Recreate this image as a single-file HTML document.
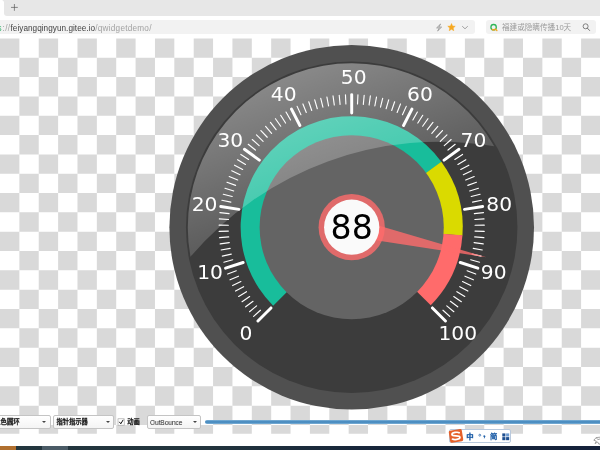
<!DOCTYPE html>
<html>
<head>
<meta charset="utf-8">
<title>qwidgetdemo</title>
<style>
html,body{margin:0;padding:0;}
body{width:600px;height:450px;overflow:hidden;background:#fff;position:relative;font-family:"Liberation Sans",sans-serif;}
.abs{position:absolute;}
#tabstrip{left:4px;top:0;width:596px;height:15.7px;background:#e7e7e7;border-bottom-left-radius:3px;}
#plus{left:10.9px;top:3.9px;width:6.8px;height:6.8px;}
#urlbar{left:-6px;top:20.3px;width:481px;height:13.7px;background:#f2f2f2;border-radius:3px;}
#url{will-change:transform;left:0;top:24.3px;height:10px;line-height:10px;font-size:8.2px;white-space:nowrap;color:#a2a2a2;}
#url span{top:0;}
#u1{left:-2.6px;}
#u2{left:2.6px;letter-spacing:0.3px;}
#u3{left:10.5px;letter-spacing:0.035px;}
#u4{left:95.3px;letter-spacing:0.24px;}
#url .s{color:#3cb371;}
#url .h{color:#444;}
#search{left:486px;top:20.3px;width:110px;height:13.7px;background:#f2f2f2;border-radius:3px;}
.gauge{position:absolute;left:0;top:0;}
.combo{height:11.7px;top:415.3px;background:linear-gradient(#fff,#f4f4f4);border:0.7px solid #c4c4c4;border-radius:2px;box-sizing:content-box;}
.arrow{position:absolute;top:5px;width:0;height:0;border-left:2px solid transparent;border-right:2px solid transparent;border-top:2.4px solid #444;}
.ctext{will-change:transform;position:absolute;font-size:6.4px;line-height:10px;top:1px;color:#333;white-space:nowrap;}
#slider{left:205px;top:420.2px;width:400px;height:3.4px;border-radius:2px;background:linear-gradient(#7fb2d8,#4a8cc0 40%,#4a8cc0 60%,#7fb2d8);}
#taskbar{left:0;top:445.6px;width:600px;height:5px;background:linear-gradient(90deg,#23363e 0,#22343d 35%,#17263a 60%,#14213a 100%);}
#ime{left:448.5px;top:429.2px;width:62.5px;height:13.6px;background:#fff;border:0.6px solid #b9c9dd;border-radius:2px;box-sizing:border-box;}
</style>
</head>
<body>
<div id="tabstrip" class="abs"></div>
<div class="abs" style="left:2.4px;top:0;width:1.7px;height:1.7px;background:radial-gradient(circle at 0 100%,#fff 1.5px,#e7e7e7 1.8px);"></div>
<svg id="plus" class="abs" viewBox="0 0 6 6"><path d="M3 0V6M0 3H6" stroke="#555" stroke-width="0.6" fill="none"/></svg>
<div id="urlbar" class="abs"></div>
<div id="url" class="abs"><span class="abs s" id="u1">s</span><span class="abs" id="u2">://</span><span class="abs h" id="u3">feiyangqingyun.gitee.io</span><span class="abs" id="u4">/qwidgetdemo/</span></div>
<div id="search" class="abs"></div>
<svg class="gauge" width="600" height="450" viewBox="0 0 600 450">
<defs>
<linearGradient id="ov" gradientUnits="userSpaceOnUse" x1="0" y1="-89" x2="0" y2="0">
<stop offset="0" stop-color="#fff" stop-opacity="0.392"/>
<stop offset="1" stop-color="#fff" stop-opacity="0.118"/>
</linearGradient>
</defs>
<path d="M0 38.4h19.37v19.33h-19.37zM38.74 38.4h19.37v19.33h-19.37zM77.48 38.4h19.37v19.33h-19.37zM116.22 38.4h19.37v19.33h-19.37zM154.96 38.4h19.37v19.33h-19.37zM193.7 38.4h19.37v19.33h-19.37zM232.44 38.4h19.37v19.33h-19.37zM271.18 38.4h19.37v19.33h-19.37zM309.92 38.4h19.37v19.33h-19.37zM348.66 38.4h19.37v19.33h-19.37zM387.4 38.4h19.37v19.33h-19.37zM426.14 38.4h19.37v19.33h-19.37zM464.88 38.4h19.37v19.33h-19.37zM503.62 38.4h19.37v19.33h-19.37zM542.36 38.4h19.37v19.33h-19.37zM581.1 38.4h19.37v19.33h-19.37zM19.37 57.73h19.37v19.33h-19.37zM58.11 57.73h19.37v19.33h-19.37zM96.85 57.73h19.37v19.33h-19.37zM135.59 57.73h19.37v19.33h-19.37zM174.33 57.73h19.37v19.33h-19.37zM213.07 57.73h19.37v19.33h-19.37zM251.81 57.73h19.37v19.33h-19.37zM290.55 57.73h19.37v19.33h-19.37zM329.29 57.73h19.37v19.33h-19.37zM368.03 57.73h19.37v19.33h-19.37zM406.77 57.73h19.37v19.33h-19.37zM445.51 57.73h19.37v19.33h-19.37zM484.25 57.73h19.37v19.33h-19.37zM522.99 57.73h19.37v19.33h-19.37zM561.73 57.73h19.37v19.33h-19.37zM0 77.06h19.37v19.33h-19.37zM38.74 77.06h19.37v19.33h-19.37zM77.48 77.06h19.37v19.33h-19.37zM116.22 77.06h19.37v19.33h-19.37zM154.96 77.06h19.37v19.33h-19.37zM193.7 77.06h19.37v19.33h-19.37zM232.44 77.06h19.37v19.33h-19.37zM271.18 77.06h19.37v19.33h-19.37zM309.92 77.06h19.37v19.33h-19.37zM348.66 77.06h19.37v19.33h-19.37zM387.4 77.06h19.37v19.33h-19.37zM426.14 77.06h19.37v19.33h-19.37zM464.88 77.06h19.37v19.33h-19.37zM503.62 77.06h19.37v19.33h-19.37zM542.36 77.06h19.37v19.33h-19.37zM581.1 77.06h19.37v19.33h-19.37zM19.37 96.39h19.37v19.33h-19.37zM58.11 96.39h19.37v19.33h-19.37zM96.85 96.39h19.37v19.33h-19.37zM135.59 96.39h19.37v19.33h-19.37zM174.33 96.39h19.37v19.33h-19.37zM213.07 96.39h19.37v19.33h-19.37zM251.81 96.39h19.37v19.33h-19.37zM290.55 96.39h19.37v19.33h-19.37zM329.29 96.39h19.37v19.33h-19.37zM368.03 96.39h19.37v19.33h-19.37zM406.77 96.39h19.37v19.33h-19.37zM445.51 96.39h19.37v19.33h-19.37zM484.25 96.39h19.37v19.33h-19.37zM522.99 96.39h19.37v19.33h-19.37zM561.73 96.39h19.37v19.33h-19.37zM0 115.72h19.37v19.33h-19.37zM38.74 115.72h19.37v19.33h-19.37zM77.48 115.72h19.37v19.33h-19.37zM116.22 115.72h19.37v19.33h-19.37zM154.96 115.72h19.37v19.33h-19.37zM193.7 115.72h19.37v19.33h-19.37zM232.44 115.72h19.37v19.33h-19.37zM271.18 115.72h19.37v19.33h-19.37zM309.92 115.72h19.37v19.33h-19.37zM348.66 115.72h19.37v19.33h-19.37zM387.4 115.72h19.37v19.33h-19.37zM426.14 115.72h19.37v19.33h-19.37zM464.88 115.72h19.37v19.33h-19.37zM503.62 115.72h19.37v19.33h-19.37zM542.36 115.72h19.37v19.33h-19.37zM581.1 115.72h19.37v19.33h-19.37zM19.37 135.05h19.37v19.33h-19.37zM58.11 135.05h19.37v19.33h-19.37zM96.85 135.05h19.37v19.33h-19.37zM135.59 135.05h19.37v19.33h-19.37zM174.33 135.05h19.37v19.33h-19.37zM213.07 135.05h19.37v19.33h-19.37zM251.81 135.05h19.37v19.33h-19.37zM290.55 135.05h19.37v19.33h-19.37zM329.29 135.05h19.37v19.33h-19.37zM368.03 135.05h19.37v19.33h-19.37zM406.77 135.05h19.37v19.33h-19.37zM445.51 135.05h19.37v19.33h-19.37zM484.25 135.05h19.37v19.33h-19.37zM522.99 135.05h19.37v19.33h-19.37zM561.73 135.05h19.37v19.33h-19.37zM0 154.38h19.37v19.33h-19.37zM38.74 154.38h19.37v19.33h-19.37zM77.48 154.38h19.37v19.33h-19.37zM116.22 154.38h19.37v19.33h-19.37zM154.96 154.38h19.37v19.33h-19.37zM193.7 154.38h19.37v19.33h-19.37zM232.44 154.38h19.37v19.33h-19.37zM271.18 154.38h19.37v19.33h-19.37zM309.92 154.38h19.37v19.33h-19.37zM348.66 154.38h19.37v19.33h-19.37zM387.4 154.38h19.37v19.33h-19.37zM426.14 154.38h19.37v19.33h-19.37zM464.88 154.38h19.37v19.33h-19.37zM503.62 154.38h19.37v19.33h-19.37zM542.36 154.38h19.37v19.33h-19.37zM581.1 154.38h19.37v19.33h-19.37zM19.37 173.71h19.37v19.33h-19.37zM58.11 173.71h19.37v19.33h-19.37zM96.85 173.71h19.37v19.33h-19.37zM135.59 173.71h19.37v19.33h-19.37zM174.33 173.71h19.37v19.33h-19.37zM213.07 173.71h19.37v19.33h-19.37zM251.81 173.71h19.37v19.33h-19.37zM290.55 173.71h19.37v19.33h-19.37zM329.29 173.71h19.37v19.33h-19.37zM368.03 173.71h19.37v19.33h-19.37zM406.77 173.71h19.37v19.33h-19.37zM445.51 173.71h19.37v19.33h-19.37zM484.25 173.71h19.37v19.33h-19.37zM522.99 173.71h19.37v19.33h-19.37zM561.73 173.71h19.37v19.33h-19.37zM0 193.04h19.37v19.33h-19.37zM38.74 193.04h19.37v19.33h-19.37zM77.48 193.04h19.37v19.33h-19.37zM116.22 193.04h19.37v19.33h-19.37zM154.96 193.04h19.37v19.33h-19.37zM193.7 193.04h19.37v19.33h-19.37zM232.44 193.04h19.37v19.33h-19.37zM271.18 193.04h19.37v19.33h-19.37zM309.92 193.04h19.37v19.33h-19.37zM348.66 193.04h19.37v19.33h-19.37zM387.4 193.04h19.37v19.33h-19.37zM426.14 193.04h19.37v19.33h-19.37zM464.88 193.04h19.37v19.33h-19.37zM503.62 193.04h19.37v19.33h-19.37zM542.36 193.04h19.37v19.33h-19.37zM581.1 193.04h19.37v19.33h-19.37zM19.37 212.37h19.37v19.33h-19.37zM58.11 212.37h19.37v19.33h-19.37zM96.85 212.37h19.37v19.33h-19.37zM135.59 212.37h19.37v19.33h-19.37zM174.33 212.37h19.37v19.33h-19.37zM213.07 212.37h19.37v19.33h-19.37zM251.81 212.37h19.37v19.33h-19.37zM290.55 212.37h19.37v19.33h-19.37zM329.29 212.37h19.37v19.33h-19.37zM368.03 212.37h19.37v19.33h-19.37zM406.77 212.37h19.37v19.33h-19.37zM445.51 212.37h19.37v19.33h-19.37zM484.25 212.37h19.37v19.33h-19.37zM522.99 212.37h19.37v19.33h-19.37zM561.73 212.37h19.37v19.33h-19.37zM0 231.7h19.37v19.33h-19.37zM38.74 231.7h19.37v19.33h-19.37zM77.48 231.7h19.37v19.33h-19.37zM116.22 231.7h19.37v19.33h-19.37zM154.96 231.7h19.37v19.33h-19.37zM193.7 231.7h19.37v19.33h-19.37zM232.44 231.7h19.37v19.33h-19.37zM271.18 231.7h19.37v19.33h-19.37zM309.92 231.7h19.37v19.33h-19.37zM348.66 231.7h19.37v19.33h-19.37zM387.4 231.7h19.37v19.33h-19.37zM426.14 231.7h19.37v19.33h-19.37zM464.88 231.7h19.37v19.33h-19.37zM503.62 231.7h19.37v19.33h-19.37zM542.36 231.7h19.37v19.33h-19.37zM581.1 231.7h19.37v19.33h-19.37zM19.37 251.03h19.37v19.33h-19.37zM58.11 251.03h19.37v19.33h-19.37zM96.85 251.03h19.37v19.33h-19.37zM135.59 251.03h19.37v19.33h-19.37zM174.33 251.03h19.37v19.33h-19.37zM213.07 251.03h19.37v19.33h-19.37zM251.81 251.03h19.37v19.33h-19.37zM290.55 251.03h19.37v19.33h-19.37zM329.29 251.03h19.37v19.33h-19.37zM368.03 251.03h19.37v19.33h-19.37zM406.77 251.03h19.37v19.33h-19.37zM445.51 251.03h19.37v19.33h-19.37zM484.25 251.03h19.37v19.33h-19.37zM522.99 251.03h19.37v19.33h-19.37zM561.73 251.03h19.37v19.33h-19.37zM0 270.36h19.37v19.33h-19.37zM38.74 270.36h19.37v19.33h-19.37zM77.48 270.36h19.37v19.33h-19.37zM116.22 270.36h19.37v19.33h-19.37zM154.96 270.36h19.37v19.33h-19.37zM193.7 270.36h19.37v19.33h-19.37zM232.44 270.36h19.37v19.33h-19.37zM271.18 270.36h19.37v19.33h-19.37zM309.92 270.36h19.37v19.33h-19.37zM348.66 270.36h19.37v19.33h-19.37zM387.4 270.36h19.37v19.33h-19.37zM426.14 270.36h19.37v19.33h-19.37zM464.88 270.36h19.37v19.33h-19.37zM503.62 270.36h19.37v19.33h-19.37zM542.36 270.36h19.37v19.33h-19.37zM581.1 270.36h19.37v19.33h-19.37zM19.37 289.69h19.37v19.33h-19.37zM58.11 289.69h19.37v19.33h-19.37zM96.85 289.69h19.37v19.33h-19.37zM135.59 289.69h19.37v19.33h-19.37zM174.33 289.69h19.37v19.33h-19.37zM213.07 289.69h19.37v19.33h-19.37zM251.81 289.69h19.37v19.33h-19.37zM290.55 289.69h19.37v19.33h-19.37zM329.29 289.69h19.37v19.33h-19.37zM368.03 289.69h19.37v19.33h-19.37zM406.77 289.69h19.37v19.33h-19.37zM445.51 289.69h19.37v19.33h-19.37zM484.25 289.69h19.37v19.33h-19.37zM522.99 289.69h19.37v19.33h-19.37zM561.73 289.69h19.37v19.33h-19.37zM0 309.02h19.37v19.33h-19.37zM38.74 309.02h19.37v19.33h-19.37zM77.48 309.02h19.37v19.33h-19.37zM116.22 309.02h19.37v19.33h-19.37zM154.96 309.02h19.37v19.33h-19.37zM193.7 309.02h19.37v19.33h-19.37zM232.44 309.02h19.37v19.33h-19.37zM271.18 309.02h19.37v19.33h-19.37zM309.92 309.02h19.37v19.33h-19.37zM348.66 309.02h19.37v19.33h-19.37zM387.4 309.02h19.37v19.33h-19.37zM426.14 309.02h19.37v19.33h-19.37zM464.88 309.02h19.37v19.33h-19.37zM503.62 309.02h19.37v19.33h-19.37zM542.36 309.02h19.37v19.33h-19.37zM581.1 309.02h19.37v19.33h-19.37zM19.37 328.35h19.37v19.33h-19.37zM58.11 328.35h19.37v19.33h-19.37zM96.85 328.35h19.37v19.33h-19.37zM135.59 328.35h19.37v19.33h-19.37zM174.33 328.35h19.37v19.33h-19.37zM213.07 328.35h19.37v19.33h-19.37zM251.81 328.35h19.37v19.33h-19.37zM290.55 328.35h19.37v19.33h-19.37zM329.29 328.35h19.37v19.33h-19.37zM368.03 328.35h19.37v19.33h-19.37zM406.77 328.35h19.37v19.33h-19.37zM445.51 328.35h19.37v19.33h-19.37zM484.25 328.35h19.37v19.33h-19.37zM522.99 328.35h19.37v19.33h-19.37zM561.73 328.35h19.37v19.33h-19.37zM0 347.68h19.37v19.33h-19.37zM38.74 347.68h19.37v19.33h-19.37zM77.48 347.68h19.37v19.33h-19.37zM116.22 347.68h19.37v19.33h-19.37zM154.96 347.68h19.37v19.33h-19.37zM193.7 347.68h19.37v19.33h-19.37zM232.44 347.68h19.37v19.33h-19.37zM271.18 347.68h19.37v19.33h-19.37zM309.92 347.68h19.37v19.33h-19.37zM348.66 347.68h19.37v19.33h-19.37zM387.4 347.68h19.37v19.33h-19.37zM426.14 347.68h19.37v19.33h-19.37zM464.88 347.68h19.37v19.33h-19.37zM503.62 347.68h19.37v19.33h-19.37zM542.36 347.68h19.37v19.33h-19.37zM581.1 347.68h19.37v19.33h-19.37zM19.37 367.01h19.37v19.33h-19.37zM58.11 367.01h19.37v19.33h-19.37zM96.85 367.01h19.37v19.33h-19.37zM135.59 367.01h19.37v19.33h-19.37zM174.33 367.01h19.37v19.33h-19.37zM213.07 367.01h19.37v19.33h-19.37zM251.81 367.01h19.37v19.33h-19.37zM290.55 367.01h19.37v19.33h-19.37zM329.29 367.01h19.37v19.33h-19.37zM368.03 367.01h19.37v19.33h-19.37zM406.77 367.01h19.37v19.33h-19.37zM445.51 367.01h19.37v19.33h-19.37zM484.25 367.01h19.37v19.33h-19.37zM522.99 367.01h19.37v19.33h-19.37zM561.73 367.01h19.37v19.33h-19.37zM0 386.34h19.37v19.33h-19.37zM38.74 386.34h19.37v19.33h-19.37zM77.48 386.34h19.37v19.33h-19.37zM116.22 386.34h19.37v19.33h-19.37zM154.96 386.34h19.37v19.33h-19.37zM193.7 386.34h19.37v19.33h-19.37zM232.44 386.34h19.37v19.33h-19.37zM271.18 386.34h19.37v19.33h-19.37zM309.92 386.34h19.37v19.33h-19.37zM348.66 386.34h19.37v19.33h-19.37zM387.4 386.34h19.37v19.33h-19.37zM426.14 386.34h19.37v19.33h-19.37zM464.88 386.34h19.37v19.33h-19.37zM503.62 386.34h19.37v19.33h-19.37zM542.36 386.34h19.37v19.33h-19.37zM581.1 386.34h19.37v19.33h-19.37zM19.37 405.67h19.37v19.33h-19.37zM58.11 405.67h19.37v19.33h-19.37zM96.85 405.67h19.37v19.33h-19.37zM135.59 405.67h19.37v19.33h-19.37zM174.33 405.67h19.37v19.33h-19.37zM213.07 405.67h19.37v19.33h-19.37zM251.81 405.67h19.37v19.33h-19.37zM290.55 405.67h19.37v19.33h-19.37zM329.29 405.67h19.37v19.33h-19.37zM368.03 405.67h19.37v19.33h-19.37zM406.77 405.67h19.37v19.33h-19.37zM445.51 405.67h19.37v19.33h-19.37zM484.25 405.67h19.37v19.33h-19.37zM522.99 405.67h19.37v19.33h-19.37zM561.73 405.67h19.37v19.33h-19.37zM0 425h19.37v8.8h-19.37zM38.74 425h19.37v8.8h-19.37zM77.48 425h19.37v8.8h-19.37zM116.22 425h19.37v8.8h-19.37zM154.96 425h19.37v8.8h-19.37zM193.7 425h19.37v8.8h-19.37zM232.44 425h19.37v8.8h-19.37zM271.18 425h19.37v8.8h-19.37zM309.92 425h19.37v8.8h-19.37zM348.66 425h19.37v8.8h-19.37zM387.4 425h19.37v8.8h-19.37zM426.14 425h19.37v8.8h-19.37zM464.88 425h19.37v8.8h-19.37zM503.62 425h19.37v8.8h-19.37zM542.36 425h19.37v8.8h-19.37zM581.1 425h19.37v8.8h-19.37z" fill="#d9d9d9"/>
<g transform="translate(351.7 227.2) scale(1.8415)">
<circle r="99" fill="#505050"/>
<circle r="90" fill="#3c3c3c"/>
<path d="M0 0L48.78 -35.44A60.3 60.3 0 1 0 -42.64 42.64Z" fill="#18bd9b"/>
<path d="M0 0L60.13 4.53A60.3 60.3 0 0 0 48.67 -35.6Z" fill="#dada00"/>
<path d="M0 0L42.92 42.36A60.3 60.3 0 0 0 60.14 4.34Z" fill="#ff6b6b"/>
<circle r="50" fill="#646464"/>
<path d="M-43.84 43.84L-50.91 50.91M-58.97 19.16L-68.48 22.25M-61.24 -9.7L-71.11 -11.26M-50.16 -36.44L-58.25 -42.32M-28.15 -55.24L-32.69 -64.15M0 -62L0 -72M28.15 -55.24L32.69 -64.15M50.16 -36.44L58.25 -42.32M61.24 -9.7L71.11 -11.26M58.97 19.16L68.48 22.25M43.84 43.84L50.91 50.91" stroke="#fff" stroke-width="1.6" stroke-linecap="round" fill="none"/>
<path d="M-49.56 45.09L-53.25 48.46M-51.62 42.71L-55.48 45.89M-53.58 40.23L-57.58 43.23M-55.41 37.66L-59.55 40.47M-57.13 35.01L-61.39 37.62M-58.71 32.28L-63.09 34.69M-60.17 29.48L-64.66 31.68M-61.49 26.61L-66.08 28.59M-62.67 23.68L-67.35 25.45M-64.63 17.68L-69.45 19M-65.39 14.62L-70.27 15.71M-66 11.52L-70.93 12.38M-66.47 8.4L-71.43 9.02M-66.79 5.26L-71.78 5.65M-66.97 2.1L-71.96 2.26M-66.99 -1.05L-71.99 -1.13M-66.87 -4.21L-71.86 -4.52M-66.6 -7.35L-71.57 -7.9M-65.61 -13.59L-70.5 -14.6M-64.9 -16.66L-69.74 -17.91M-64.04 -19.7L-68.82 -21.17M-63.04 -22.7L-67.74 -24.39M-61.9 -25.64L-66.52 -27.55M-60.62 -28.53L-65.15 -30.66M-59.21 -31.35L-63.63 -33.69M-57.67 -34.11L-61.97 -36.65M-56 -36.78L-60.18 -39.53M-52.29 -41.89L-56.19 -45.02M-50.26 -44.31L-54.01 -47.61M-48.11 -46.63L-51.71 -50.11M-45.86 -48.84L-49.29 -52.49M-43.51 -50.95L-46.76 -54.75M-41.06 -52.94L-44.13 -56.89M-38.53 -54.82L-41.4 -58.91M-35.9 -56.57L-38.58 -60.79M-33.2 -58.2L-35.67 -62.54M-27.57 -61.06L-29.63 -65.62M-24.66 -62.3L-26.5 -66.94M-21.7 -63.39L-23.32 -68.12M-18.69 -64.34L-20.09 -69.14M-15.64 -65.15L-16.81 -70.01M-12.55 -65.81L-13.49 -70.72M-9.44 -66.33L-10.14 -71.28M-6.31 -66.7L-6.78 -71.68M-3.16 -66.93L-3.39 -71.92M3.16 -66.93L3.39 -71.92M6.31 -66.7L6.78 -71.68M9.44 -66.33L10.14 -71.28M12.55 -65.81L13.49 -70.72M15.64 -65.15L16.81 -70.01M18.69 -64.34L20.09 -69.14M21.7 -63.39L23.32 -68.12M24.66 -62.3L26.5 -66.94M27.57 -61.06L29.63 -65.62M33.2 -58.2L35.67 -62.54M35.9 -56.57L38.58 -60.79M38.53 -54.82L41.4 -58.91M41.06 -52.94L44.13 -56.89M43.51 -50.95L46.76 -54.75M45.86 -48.84L49.29 -52.49M48.11 -46.63L51.71 -50.11M50.26 -44.31L54.01 -47.61M52.29 -41.89L56.19 -45.02M56 -36.78L60.18 -39.53M57.67 -34.11L61.97 -36.65M59.21 -31.35L63.63 -33.69M60.62 -28.53L65.15 -30.66M61.9 -25.64L66.52 -27.55M63.04 -22.7L67.74 -24.39M64.04 -19.7L68.82 -21.17M64.9 -16.66L69.74 -17.91M65.61 -13.59L70.5 -14.6M66.6 -7.35L71.57 -7.9M66.87 -4.21L71.86 -4.52M66.99 -1.05L71.99 -1.13M66.97 2.1L71.96 2.26M66.79 5.26L71.78 5.65M66.47 8.4L71.43 9.02M66 11.52L70.93 12.38M65.39 14.62L70.27 15.71M64.63 17.68L69.45 19M62.67 23.68L67.35 25.45M61.49 26.61L66.08 28.59M60.17 29.48L64.66 31.68M58.71 32.28L63.09 34.69M57.13 35.01L61.39 37.62M55.41 37.66L59.55 40.47M53.58 40.23L57.58 43.23M51.62 42.71L55.48 45.89M49.56 45.09L53.25 48.46" stroke="#fff" stroke-width="0.62" stroke-linecap="round" fill="none"/>
<g font-family="'DejaVu Sans','Liberation Sans',sans-serif" font-size="11" fill="#fff">
<text x="-60.9" y="61.3">0</text>
<text x="-83.9" y="28.3">10</text>
<text x="-86.9" y="-8.7">20</text>
<text x="-72.9" y="-43.7">30</text>
<text x="-43.9" y="-68.7">40</text>
<text x="-5.9" y="-77.7">50</text>
<text x="30.1" y="-68.7">60</text>
<text x="59.1" y="-43.7">70</text>
<text x="73.1" y="-8.7">80</text>
<text x="70.1" y="28.3">90</text>
<text x="47.1" y="61.3">100</text>
</g>
<path d="M-5 0L5 0L0 75Z" fill="#ff6b6b" fill-opacity="0.8" transform="rotate(282.6)"/>
<circle r="18" fill="#ff6b6b" fill-opacity="0.8"/>
<circle r="15" fill="#fafafa"/>
<text x="-11.45" y="6.23" font-family="'DejaVu Sans','Liberation Sans',sans-serif" font-size="18" fill="#000">88</text>
<path d="M-87.75 -14.87A89 89 0 0 1 87.75 -14.87A178 178 0 0 0 -87.75 -14.87Z" fill="url(#ov)" transform="rotate(-20)"/>
</g>
</svg>
<div class="abs combo" style="left:-2px;width:50.6px;"><div class="arrow" style="left:42.5px;"></div></div>
<div class="abs combo" style="left:53.3px;width:59px;"><div class="arrow" style="left:51.5px;"></div></div>
<div class="abs combo" style="left:147px;width:51.8px;"><div class="ctext" style="left:2.3px;top:1.5px;color:#161616;font-size:7.3px;transform:scaleX(0.885);transform-origin:0 50%;">OutBounce</div><div class="arrow" style="left:44.8px;"></div></div>
<div id="slider" class="abs"></div>
<div id="ime" class="abs"></div>
<div id="taskbar" class="abs"><div class="abs" style="left:0;top:0;width:15.8px;height:5px;background:#b06f2e"></div><div class="abs" style="left:42px;top:0;width:25.6px;height:5px;background:#4a5b66"></div></div>
<svg class="gauge" width="600" height="450" viewBox="0 0 600 450">
<g font-family="'Liberation Sans','Noto Sans CJK SC',sans-serif">
<text x="502" y="30.2" font-size="7.6" fill="#9b9b9b">福建或隐瞒传播10天</text>
<text x="-5.85" y="424.1" font-size="6.4" fill="#1c1c1c" stroke="#1c1c1c" stroke-width="0.35">三色圆环</text>
<text x="56.4" y="424.1" font-size="6.3" fill="#1c1c1c" stroke="#1c1c1c" stroke-width="0.35">指针指示器</text>
<text x="127.3" y="424.1" font-size="6.3" fill="#1c1c1c" stroke="#1c1c1c" stroke-width="0.35">动画</text>
<text x="466.2" y="439.3" font-size="7.4" fill="#1f5fa8" stroke="#1f5fa8" stroke-width="0.52">中</text>
<text x="490" y="439.3" font-size="7.4" fill="#1f5fa8" stroke="#1f5fa8" stroke-width="0.37">简</text>
</g>
<rect x="118" y="418.8" width="6.2" height="6.4" fill="#fff" stroke="#9a9a9a" stroke-width="0.6"/>
<path d="M119.3 421.8L120.8 423.8L123.2 419.8" fill="none" stroke="#111" stroke-width="1"/>
<path d="M440.6 24L436.6 27.9H439.4L437.6 31L441.6 27.1H438.8Z" fill="none" stroke="#888" stroke-width="0.7" stroke-linejoin="round"/>
<path d="M451.5 23.6L452.56 26.04L455.21 26.29L453.21 28.06L453.79 30.66L451.5 29.3L449.21 30.66L449.79 28.06L447.79 26.29L450.44 26.04Z" fill="#f6a821" stroke="#f6a821" stroke-width="0.5" stroke-linejoin="round"/>
<path d="M462.2 26.2L465 28.8L467.8 26.2" fill="none" stroke="#888" stroke-width="0.75"/>
<circle cx="493.6" cy="27.2" r="2.7" fill="none" stroke="#2fb457" stroke-width="1.3"/>
<path d="M495.5 29.1A2.7 2.7 0 0 1 491.7 29.1" fill="none" stroke="#f5a623" stroke-width="1.3"/>
<path d="M495.3 28.9L496.9 30.5" fill="none" stroke="#f5a623" stroke-width="1.3" stroke-linecap="round"/>
<circle cx="585.6" cy="26.3" r="2.5" fill="none" stroke="#666" stroke-width="0.8"/>
<path d="M587.4 28.2L589.6 30.5" fill="none" stroke="#666" stroke-width="0.9" stroke-linecap="round"/>
<g transform="translate(456 435.9) rotate(-9)"><rect x="-6.6" y="-6.1" width="13.2" height="12.2" rx="1.6" fill="#e5602a"/><path d="M3.6 -2.6C2.4 -3.8 -3.6 -4.2 -3.8 -1.9C-4 0.3 3.9 -0.6 3.7 1.9C3.5 4.2 -2.6 3.8 -4 2.6" fill="none" stroke="#fff" stroke-width="1.7" stroke-linecap="round"/></g>
<circle cx="479.8" cy="435.2" r="0.95" fill="none" stroke="#1f5fa8" stroke-width="0.7"/>
<path d="M483.4 436.3a1 1 0 1 1 1.6 0.8c0 0.8 -0.5 1.5 -1.3 1.9c0.4 -0.5 0.5 -1.1 0.4 -1.7a1 1 0 0 1 -0.7 -1z" fill="#1f5fa8"/>
<rect x="502.3" y="433.4" width="3.1" height="3.1" fill="#1f4f90"/><rect x="506.1" y="433.4" width="3.1" height="3.1" fill="#6d9ad0"/><rect x="502.3" y="437.1" width="3.1" height="3.1" fill="#1f4f90"/><rect x="506.1" y="437.1" width="3.1" height="3.1" fill="#1f4f90"/>
<path d="M593.8 440.2L596.2 437.6L600 437.2M593.8 440.2L596.4 441.2L595 443.6L597.6 442L599 444.4L600 443.6M596.2 437.6L597.8 439.6L600 439" fill="none" stroke="#7d7d7d" stroke-width="0.7"/>
</svg>
</body>
</html>
